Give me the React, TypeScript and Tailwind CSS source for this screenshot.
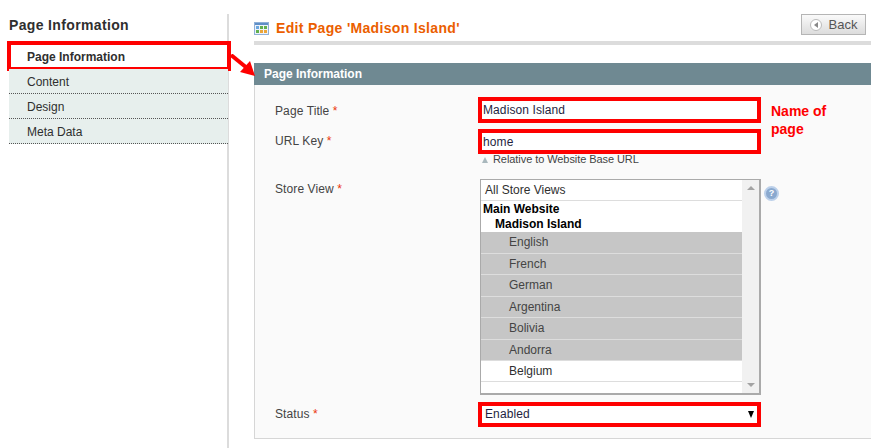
import React from "react";

const navItems = ["Content", "Design", "Meta Data"];
const greyOptions = ["English", "French", "German", "Argentina", "Bolivia", "Andorra"];

function Label({ text, className }: { text: string; className: string }) {
  return (
    <div className={`absolute left-[20px] text-[12px] leading-[15px] tracking-[0.1px] text-[#444] ${className}`}>
      {text} <span className="text-[#eb340a]">*</span>
    </div>
  );
}

function GridIcon() {
  return (
    <svg width="15" height="13" viewBox="0 0 15 13" className="shrink-0">
      <rect x="0.5" y="0.5" width="14" height="12" fill="#eef3fa" stroke="#8fb0d8" />
      <rect x="1" y="1" width="13" height="2" fill="#5f8fc7" />
      <rect x="2" y="4" width="3" height="3" fill="#6aa7e0" />
      <rect x="6" y="4" width="3" height="3" fill="#62b04f" />
      <rect x="10" y="4" width="3" height="3" fill="#62b04f" />
      <rect x="2" y="8" width="3" height="3" fill="#62b04f" />
      <rect x="6" y="8" width="3" height="3" fill="#eba53a" />
      <rect x="10" y="8" width="3" height="3" fill="#eba53a" />
    </svg>
  );
}

export default function App() {
  return (
    <div className="relative flex h-[448px] w-[871px] overflow-hidden bg-white font-['Liberation_Sans',Arial,sans-serif]">
      {/* Left column */}
      <div className="relative mt-[14px] w-[229px] shrink-0 border-r-2 border-[#dcdcdc] pl-[9px]">
        <h3 className="h-[27px] pt-[2px] text-[14px] font-bold leading-[18px] tracking-[0.35px] text-[#2f2f2f]">Page Information</h3>
        <div className="-ml-[2px] -mr-[4px] flex h-[30px] items-center border-4 border-[#fe0000] bg-white pl-[16px] pt-[1px] text-[12px] font-bold leading-none text-[#2f2f2f]">
          Page Information
        </div>
        <div className="-mr-[1px] -mt-[2px]">
          {navItems.map((item) => (
            <div
              key={item}
              className="flex h-[25px] items-center border-b border-dotted border-[#555] bg-[#e7efed] pl-[18px] pt-[2px] text-[12px] text-[#2f2f2f]"
            >
              {item}
            </div>
          ))}
        </div>
      </div>

      {/* Arrow from the tab to the panel */}
      <svg width="30" height="26" viewBox="0 0 30 26" className="absolute left-[229px] top-[54px]">
        <path d="M2 1 L18 14" stroke="#fe0000" strokeWidth="4" />
        <path d="M26 22 L11 18 L21 7 Z" fill="#fe0000" />
      </svg>

      {/* Main column */}
      <div className="ml-[25px] min-w-0 flex-1">
        <div className="box-content flex h-[27px] items-start justify-between pt-[14px]">
          <div className="mt-[5px] flex items-center gap-[7px]">
            <GridIcon />
            <h3 className="text-[14px] font-bold leading-[18px] tracking-[0.32px] text-[#eb5e00]">Edit Page 'Madison Island'</h3>
          </div>
          <button className="mr-[5px] flex h-[21px] w-[65px] items-center justify-center gap-[7px] border border-[#b5b5b5] bg-gradient-to-b from-[#fafafa] to-[#dcdcdc] text-[13px] text-[#555]">
            <span className="flex h-[12px] w-[12px] items-center justify-center rounded-full border border-[#bbb] bg-white">
              <span className="h-0 w-0 border-y-[3px] border-r-[4px] border-y-transparent border-r-[#888]" />
            </span>
            Back
          </button>
        </div>
        <div className="h-[4px] bg-[#dcdcdc]" />

        <div className="mt-[18px] flex h-[22px] items-center bg-[#6f8992] pl-[10px] text-[12px] font-bold text-white">
          Page Information
        </div>

        {/* Form panel */}
        <div className="relative h-[354px] border-b border-l border-[#d6d6d6] bg-[#fafafa]">
          <Label text="Page Title" className="top-[19px]" />
          <Label text="URL Key" className="top-[49px]" />
          <Label text="Store View" className="top-[97px]" />
          <Label text="Status" className="top-[322px]" />

          <div className="absolute left-[223px] top-[12px] flex h-[26px] w-[283px] items-center border-4 border-[#fe0000] bg-white pl-[1px] text-[12px] tracking-[0.1px] text-[#1f1f3f]">
            Madison Island
          </div>
          <div className="absolute left-[516px] top-[17px] w-[80px] text-[14px] font-bold leading-[18px] text-[#fe0000]">
            Name of page
          </div>
          <div className="absolute left-[223px] top-[44px] flex h-[25px] w-[283px] items-center border-4 border-[#fe0000] bg-white pl-[1px] text-[12px] tracking-[0.1px] text-[#1f1f3f]">
            home
          </div>
          <div className="absolute left-[227px] top-[68px] flex items-center gap-[5px] text-[11px] leading-[13px] tracking-[-0.07px] text-[#444]">
            <span className="h-0 w-0 border-x-[3px] border-b-[6px] border-x-transparent border-b-[#a9b8bd]" />
            Relative to Website Base URL
          </div>

          {/* Store view list */}
          <div className="absolute left-[225px] top-[94px] flex h-[216px] w-[281px] border border-b-2 border-r-2 border-[#aaa] bg-white text-[12px]">
            <div className="min-w-0 flex-1">
              <div className="flex h-[21px] items-center border-b border-[#ddd] pl-[4px] text-[#2f2f2f]">All Store Views</div>
              <div className="flex h-[15px] items-center pl-[2px] font-bold text-black">Main Website</div>
              <div className="flex h-[16px] items-center pl-[14px] font-bold text-black">Madison Island</div>
              {greyOptions.map((option) => (
                <div key={option} className="flex h-[21.5px] items-center border-b border-[#ddd] bg-[#c6c6c6] pl-[28px] text-[#444]">
                  {option}
                </div>
              ))}
              <div className="flex h-[21px] items-center border-b border-[#ddd] bg-white pl-[28px] text-[#2f2f2f]">Belgium</div>
            </div>
            <div className="flex w-[17px] shrink-0 flex-col items-center justify-between bg-[#f1f1f1] py-[6px]">
              <span className="h-0 w-0 border-x-[4px] border-b-[4px] border-x-transparent border-b-[#a3a3a3]" />
              <span className="h-0 w-0 border-x-[4px] border-t-[4px] border-x-transparent border-t-[#a3a3a3]" />
            </div>
          </div>

          {/* Help bubble */}
          <div className="absolute left-[509px] top-[101px] flex h-[15px] w-[15px] items-center justify-center rounded-full border-2 border-[#bcd0ea] bg-[#8aa9cf] text-[9px] font-bold leading-none text-white">
            ?
          </div>

          {/* Status select */}
          <div className="absolute left-[223px] top-[317px] flex h-[25px] w-[283px] items-center justify-between border-4 border-[#fe0000] bg-white pb-[1px] pl-[3px] pr-[3px] text-[12px] tracking-[0.1px] text-[#1f1f3f]">
            Enabled
            <span className="h-0 w-0 border-x-[3.5px] border-t-[7px] border-x-transparent border-t-black" />
          </div>
        </div>
      </div>
    </div>
  );
}
